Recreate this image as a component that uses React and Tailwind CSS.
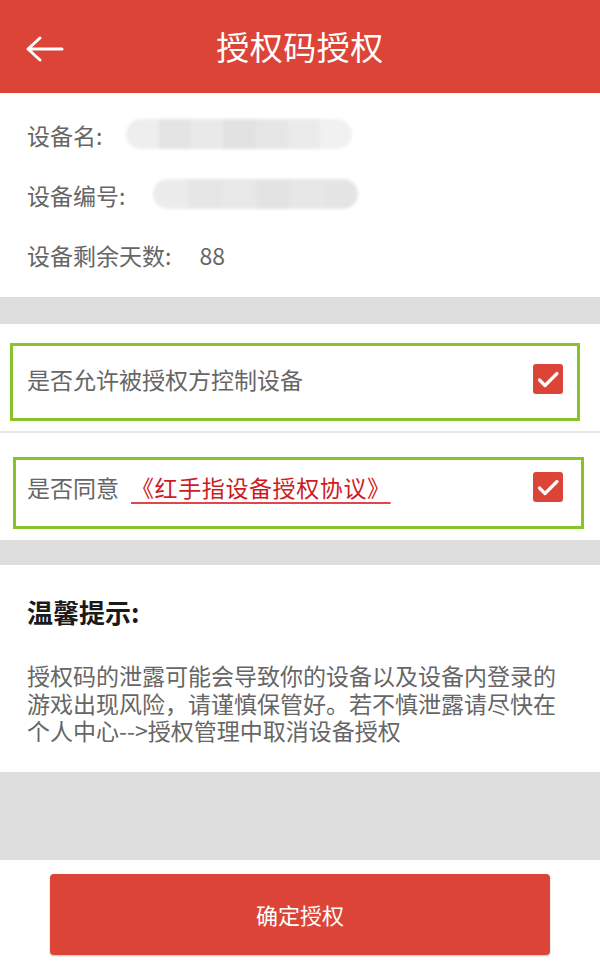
import React, { useState } from 'react';

const FONT = { fontFamily: '"Noto Sans CJK SC", "Noto Sans", sans-serif' };

const CheckBox = ({ checked, onToggle }) => (
  <button
    type="button"
    onClick={onToggle}
    className={`w-[30px] h-[30px] rounded-[3px] flex items-center justify-center shrink-0 ${checked ? 'bg-[#dc4437]' : 'bg-white border-2 border-[#bbbbbb]'}`}
  >
    {checked && (
      <svg width="30" height="30" viewBox="0 0 30 30" fill="none">
        <path d="M6.5 16 L12 21.5 L24 9.5" stroke="#fff" strokeWidth="3.2" strokeLinecap="round" strokeLinejoin="round" />
      </svg>
    )}
  </button>
);

// mosaic blur used to hide device data in the screenshot
const Masked = ({ parts, className }) => (
  <div className={`flex h-[30px] overflow-hidden rounded-full blur-[1.5px] ${className}`}>
    {parts.map((c, i) => (
      <div key={i} className="flex-1 h-full" style={{ backgroundColor: c }} />
    ))}
  </div>
);

export default function App() {
  const [allowControl, setAllowControl] = useState(true);
  const [agree, setAgree] = useState(true);

  return (
    <div className="w-full min-h-screen flex flex-col bg-white" style={FONT}>
      {/* header */}
      <div className="h-[93px] bg-[#dc4437] grid grid-cols-[1fr_auto_1fr] items-center shrink-0">
        <button type="button" className="pl-[25px] pt-[4px] flex items-center">
          <svg width="40" height="28" viewBox="0 0 40 28" fill="none">
            <path d="M15 3 L3 14 L15 25 M3 14 H37" stroke="#fff" strokeWidth="3" strokeLinecap="round" strokeLinejoin="round" />
          </svg>
        </button>
        <h1 className="text-[33px] leading-none text-white tracking-[0.5px]">授权码授权</h1>
        <div />
      </div>

      {/* device info */}
      <div className="bg-white pt-[12px] pb-[12px] px-[27px] text-[23px] text-[#666666]">
        <div className="h-[60px] flex items-center">
          <span>设备名:</span>
          <Masked
            className="ml-[24px] w-[226px] -mt-[2px]"
            parts={['#eeeeee', '#e4e4e4', '#e9e9e9', '#e2e2e2', '#e6e6e6', '#ebebeb', '#f1f1f1']}
          />
        </div>
        <div className="h-[60px] flex items-center">
          <span>设备编号:</span>
          <Masked
            className="ml-[28px] w-[205px] h-[26px] -mt-[2px] rounded-[6px]"
            parts={['#ececec', '#e6e6e6', '#e8e8e8', '#e3e3e3', '#e7e7e7', '#e5e5e5']}
          />
        </div>
        <div className="h-[60px] flex items-center">
          <span>设备剩余天数:</span>
          <span className="ml-[28px]">88</span>
        </div>
      </div>

      <div className="h-[27px] bg-[#dddddd]" />

      {/* permission */}
      <div className="bg-white pt-[19px] pb-[10px] pl-[10px] pr-[20px]">
        <div className="h-[78px] border-[3px] border-[#88c425] flex items-center justify-between pl-[14px] pr-[14px] pb-[6px]">
          <span className="text-[23px] text-[#666666]">是否允许被授权方控制设备</span>
          <CheckBox checked={allowControl} onToggle={() => setAllowControl(!allowControl)} />
        </div>
      </div>
      <div className="h-[2px] bg-[#e6e6e6]" />

      {/* agreement */}
      <div className="bg-white pt-[24px] pb-[11px] pl-[13px] pr-[16px]">
        <div className="h-[72px] border-[3px] border-[#88c425] flex items-start justify-between pl-[11px] pr-[18px] pt-[12px]">
          <span className="text-[23px] leading-[30px] text-[#666666]">
            是否同意
            <a href="#" className="ml-[12px] tracking-[0.6px] text-[#cf1b1f] underline decoration-[#e0474a] decoration-2 underline-offset-[5px]">《红手指设备授权协议》</a>
          </span>
          <CheckBox checked={agree} onToggle={() => setAgree(!agree)} />
        </div>
      </div>

      <div className="h-[25px] bg-[#dddddd]" />

      {/* tips */}
      <div className="bg-white px-[27px] pt-[31px] pb-[27px]">
        <h2 className="text-[26px] leading-[32px] font-bold text-[#1a1a1a]">温馨提示:</h2>
        <p className="mt-[34px] text-[23px] leading-[27.5px] text-[#666666]">
          授权码的泄露可能会导致你的设备以及设备内登录的<br />
          游戏出现风险，请谨慎保管好。若不慎泄露请尽快在<br />
          个人中心--&gt;授权管理中取消设备授权
        </p>
      </div>

      <div className="h-[88px] bg-[#dddddd]" />

      {/* confirm */}
      <div className="flex-1 bg-white flex justify-center pt-[14px] pb-[12px]">
        <button
          type="button"
          className="w-[500px] h-[81px] rounded-[4px] bg-[#dc4437] text-white text-[22px] shadow-[0_1px_2px_rgba(0,0,0,0.25)]"
        >
          确定授权
        </button>
      </div>
    </div>
  );
}
